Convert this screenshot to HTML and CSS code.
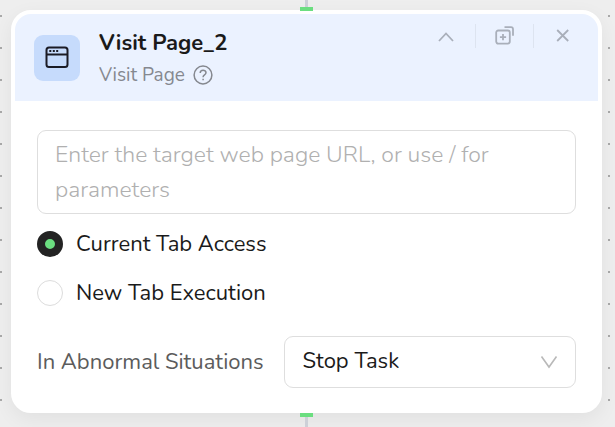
FILE: index.html
```html
<!DOCTYPE html>
<html lang="en">
<head>
    <meta charset="UTF-8">
    <meta name="viewport" content="width=device-width, initial-scale=1.0">
    <title>Visit Page_2</title>
    <link rel="stylesheet" href="styles.css">
</head>
<body>
    <div class="canvas">
        <section class="node">
            <span class="port port-in"></span>
            <header class="node-header">
                <span class="node-icon">
                    <svg width="24" height="24" viewBox="0 0 24 24" fill="none" stroke="#1a1b25" stroke-width="2">
                        <rect x="1.5" y="1.5" width="21" height="19.5" rx="2.5"/>
                        <path d="M1.5 8.5h21"/>
                        <path d="M4.3 5.1h2M7.8 5.1h2M11.2 5.1h2"/>
                    </svg>
                </span>
                <div class="node-title">
                    <h1>Visit Page_2</h1>
                    <p>
                        Visit Page
                        <svg width="20" height="20" viewBox="0 0 20 20" fill="none" stroke="#85888f" stroke-width="1.5">
                            <circle cx="10" cy="10" r="8.9"/>
                            <path d="M7.2 8.1c0-4 5.8-3.7 5.8-.3 0 2-2.9 2.1-2.9 4.1v.4M10.1 13.7v1.5"/>
                        </svg>
                    </p>
                </div>
                <div class="actions">
                    <button type="button" aria-label="Collapse">
                        <svg width="20" height="20" viewBox="0 0 20 20"><path d="M3 15l7-7.5L17 15"/></svg>
                    </button>
                    <button type="button" aria-label="Duplicate">
                        <svg width="20" height="20" viewBox="0 0 20 20"><path d="M3.2 4.5h9.6a2 2 0 0 1 2 2v9.1a2 2 0 0 1-2 2H3.2a2 2 0 0 1-2-2V6.5a2 2 0 0 1 2-2zM9.5 1.2H16a2 2 0 0 1 2 2v6.5M8 8v6.2M4.9 11.1h6.2"/></svg>
                    </button>
                    <button type="button" aria-label="Close">
                        <svg width="20" height="20" viewBox="0 0 20 20"><path d="M4.2 4l11 11M15.2 4l-11 11"/></svg>
                    </button>
                </div>
            </header>
            <form class="node-body">
                <textarea class="url" rows="2" aria-label="Page URL" placeholder="Enter the target web page URL, or use / for parameters"></textarea>
                <div class="options">
                    <label><input type="radio" name="tab" checked>Current Tab Access</label>
                    <label><input type="radio" name="tab">New Tab Execution</label>
                </div>
                <div class="field">
                    <label for="abnormal">In Abnormal Situations</label>
                    <div class="select">
                        <select id="abnormal">
                            <option>Stop Task</option>
                        </select>
                        <svg width="18" height="14" viewBox="0 0 18 14" fill="none" stroke="#b9b9b9" stroke-width="1.6"><path d="M1.5 1.5L9 12l7.5-10.5"/></svg>
                    </div>
                </div>
            </form>
            <span class="port port-out"></span>
        </section>
    </div>
</body>
</html>
```
FILE: styles.css
```css
* {
    box-sizing: border-box;
}
body {
    margin: 0;
    background-color: #eeeeee;
    color: #1a1a1a;
    font-family: Nunito, Lato, sans-serif;
    font-size: 22px;
    overflow: hidden;
}
.canvas {
    min-height: 100vh;
    padding: 10px 13px 14px 11px;
    background-image: radial-gradient(circle at 1px 16px, #a9a9a9 1px, transparent 1px);
    background-size: 32px 32px;
}
.node {
    position: relative;
    border: 4px solid #ffffff;
    border-radius: 20px;
    background-color: #ffffff;
    box-shadow: 0 6px 20px rgba(0, 0, 0, 0.06);
}
.node-header {
    display: flex;
    align-items: flex-start;
    height: 87px;
    padding: 8px 20px 0 19px;
    border-radius: 16px 16px 0 0;
    background-color: #ebf2ff;
}
.node-icon {
    display: flex;
    align-items: center;
    justify-content: center;
    width: 46px;
    height: 46px;
    margin-top: 13px;
    border-radius: 9px;
    background-color: #c6dbfc;
}
.node-title {
    flex: 1;
    padding: 5px 0 0 19px;
}
.node-title h1 {
    margin: 0;
    font-size: 22px;
    font-weight: 700;
    line-height: 32px;
}
.node-title p {
    display: flex;
    align-items: center;
    gap: 8px;
    margin: 0;
    color: #85888f;
    font-size: 19px;
    line-height: 32px;
}
.actions {
    display: flex;
    margin-right: -13px;
}
.actions button {
    display: flex;
    align-items: center;
    justify-content: center;
    width: 58px;
    height: 24px;
    margin: 2px 0;
    padding: 0;
    border: 0;
    background: none;
}
.actions button + button {
    border-left: 1px solid #dde4f0;
}
.actions svg {
    fill: none;
    stroke: #a9afba;
    stroke-width: 1.8;
}
.node-body {
    padding: 29px 22px 21px;
}
.url {
    display: block;
    width: 100%;
    height: 84px;
    padding: 6px 17px;
    border: 1px solid #dedede;
    border-radius: 9px;
    font: inherit;
    font-size: 23px;
    font-weight: 300;
    line-height: 35px;
    resize: none;
    overflow: hidden;
}
.url::placeholder {
    color: #b0b0b0;
}
.options {
    display: flex;
    flex-direction: column;
    gap: 23px;
    padding: 17px 0 30px;
}
.options label {
    display: flex;
    align-items: center;
    gap: 13px;
    line-height: 26px;
}
.options input {
    appearance: none;
    width: 26px;
    height: 26px;
    margin: 0;
    border: 1px solid #dcdcdc;
    border-radius: 50%;
    background-color: #ffffff;
}
.options input:checked {
    border: 8px solid #232323;
    background-color: #6bde80;
}
.field {
    display: flex;
    align-items: center;
    gap: 20px;
    color: #5c5c5c;
}
.select {
    position: relative;
    flex: 1;
}
.select select {
    appearance: none;
    display: block;
    width: 100%;
    height: 52px;
    padding: 0 18px 2px;
    border: 1px solid #dedede;
    border-radius: 9px;
    background-color: #ffffff;
    color: #1a1a1a;
    font: inherit;
}
.select svg {
    position: absolute;
    top: 19px;
    right: 18px;
    pointer-events: none;
}
/* connection handles on the node edges */
.port {
    position: absolute;
    left: 50%;
    width: 13px;
    height: 4px;
    margin-left: -7px;
    background-color: #6bde80;
}
.port::after {
    content: "";
    position: absolute;
    left: 5px;
    width: 3px;
    height: 12px;
    background-color: #cdd0d7;
}
.port-in {
    top: -7px;
}
.port-in::after {
    bottom: 4px;
}
.port-out {
    bottom: -8px;
}
.port-out::after {
    top: 4px;
}
```
